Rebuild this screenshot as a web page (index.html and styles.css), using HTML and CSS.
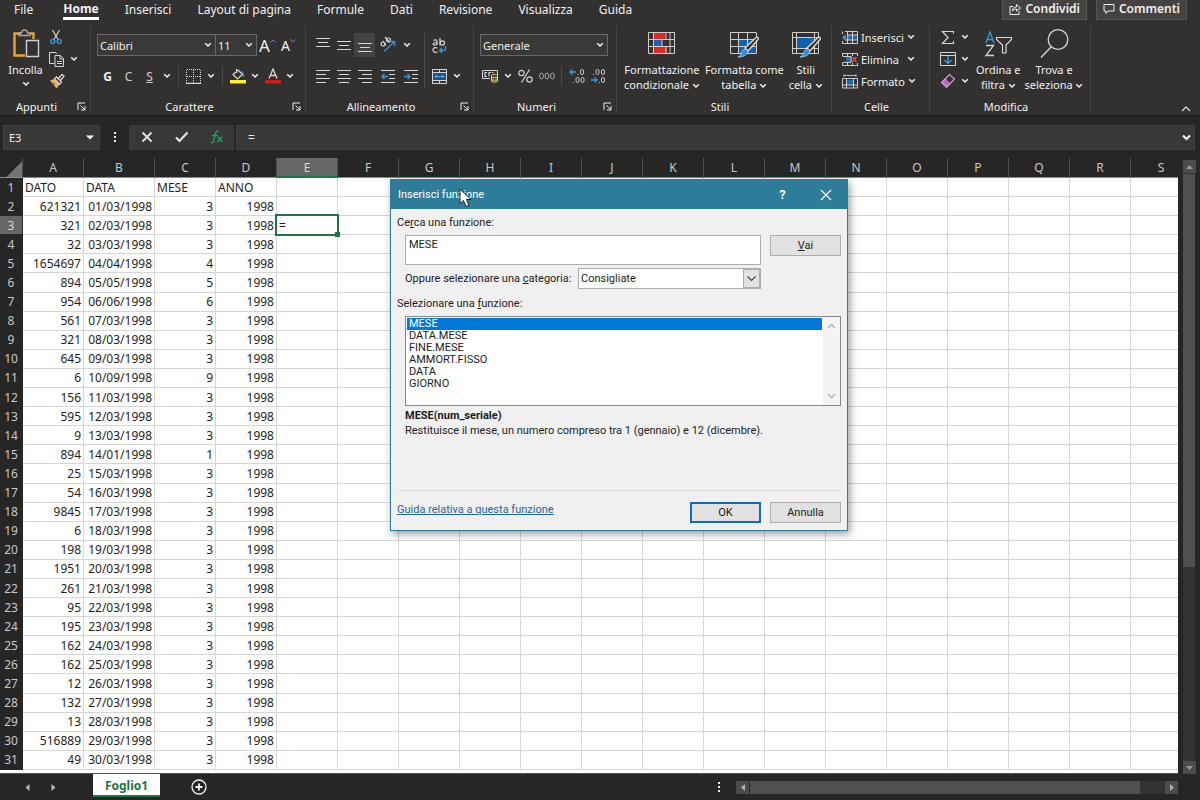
FILE: index.html
```html
<!DOCTYPE html>
<html lang="it">
<head>
<meta charset="utf-8">
<title>Foglio1</title>
<link rel="stylesheet" href="styles.css">
</head>
<body>
<svg class="defs" aria-hidden="true">
  <symbol id="chev" viewBox="0 0 8 6"><path d="M1.200 1.200 4 4l2.800-2.800" fill="none" stroke="currentColor" stroke-width="1.500"/></symbol>
  <symbol id="launch" viewBox="0 0 9 9"><path d="M1 8V1h7M3.500 3.500 7.500 7.500M8 4v4H4" fill="none" stroke="currentColor"/></symbol>
</svg>
<div class="app">
  <nav class="tabs">
    <button class="tab">File</button>
    <button class="tab active">Home</button>
    <button class="tab">Inserisci</button>
    <button class="tab">Layout di pagina</button>
    <button class="tab">Formule</button>
    <button class="tab">Dati</button>
    <button class="tab">Revisione</button>
    <button class="tab">Visualizza</button>
    <button class="tab">Guida</button>
    <div class="tab-actions">
      <button class="top-btn"><svg width="12" height="12" viewBox="0 0 12 12" fill="none" stroke="currentColor"><path d="M4 3.500H1v8h9V8M3.500 8c0-3 1.500-4 4-4V1.500L11.500 5 7.500 8V6C5.500 6 4.500 6.500 3.500 8z"/></svg>Condividi</button>
      <button class="top-btn"><svg width="12" height="12" viewBox="0 0 12 12" fill="none" stroke="currentColor"><path d="M1 1.500h10v6.500H5L2.800 10.500V8H1z"/></svg>Commenti</button>
    </div>
  </nav>

  <div class="ribbon">
    <section class="group g-clip">
      <div class="tools">
        <button class="big paste">
          <svg width="28" height="30" viewBox="0 0 28 30" fill="none"><path d="M9 4.500H2.500v22H13M18 4.500h3.500V10" stroke="#e8a33d" stroke-width="2.400"/><path d="M7 6.500V4h2.500c0-4 6-4 6 0H18v2.500z" stroke="#a9a9b4" stroke-width="1.300"/><path d="M14.500 11.500h12v16h-12z" stroke="#c8d2d8" stroke-width="1.400"/></svg>
          <span>Incolla</span>
          <svg class="chev"><use href="#chev"/></svg>
        </button>
        <div class="stack">
          <button class="ib" aria-label="Taglia"><svg width="14" height="16" viewBox="0 0 14 16" fill="none"><path d="M3.500 1 9 10.500M10.500 1 5 10.500" stroke="#d6d6d6" stroke-width="1.200"/><circle cx="3.800" cy="12.500" r="2" stroke="#3b97d3" stroke-width="1.400"/><circle cx="10.200" cy="12.500" r="2" stroke="#3b97d3" stroke-width="1.400"/></svg></button>
          <button class="ib split" aria-label="Copia"><svg width="16" height="16" viewBox="0 0 16 16" fill="none" stroke="#d6d6d6"><path d="M5.500 12.500h-5V1.500H7L8.500 3M6 4.500h5.500l3 3v8H6zM11 4.500V8h3.500M8 10.500h5M8 12.500h5"/></svg><svg class="chev"><use href="#chev"/></svg></button>
          <button class="ib" aria-label="Copia formato"><svg width="16" height="16" viewBox="0 0 16 16" fill="none"><path d="M1 7.500 5.500 6l5.500 5L7.500 15.500z" fill="#eeb262"/><path d="M5.500 6 7.500 4l5 5-1.800 2.200zM9.500 5.500l3.500-4 2 1.800-3.500 4.200" stroke="#d6d6d6" stroke-width="1.300"/><path d="M4 9.500 6 12" stroke="#5b4526"/></svg></button>
        </div>
      </div>
      <footer><span>Appunti</span><button aria-label="Opzioni Appunti"><svg width="9" height="9"><use href="#launch"/></svg></button></footer>
    </section>

    <section class="group g-font">
      <div class="tools rows">
        <div class="row">
          <span class="combo w-font"><select aria-label="Carattere"><option>Calibri</option></select><svg class="chev"><use href="#chev"/></svg></span>
          <span class="combo w-size"><select aria-label="Dimensione"><option>11</option></select><svg class="chev"><use href="#chev"/></svg></span>
          <button class="ib big-a">A<svg width="6" height="4" viewBox="0 0 6 4"><path d="M.5 3.500 3 1l2.500 2.500" fill="none" stroke="#3b97d3"/></svg></button>
          <button class="ib small-a">A<svg width="6" height="4" viewBox="0 0 6 4"><path d="M.5.5 3 3 5.500.5" fill="none" stroke="#3b97d3"/></svg></button>
        </div>
        <div class="row">
          <button class="ib bold">G</button>
          <button class="ib glyph">C</button>
          <button class="ib glyph under">S</button>
          <button class="drop" aria-label="Sottolineatura"><svg class="chev"><use href="#chev"/></svg></button>
          <i class="sep"></i>
          <button class="ib" aria-label="Bordi"><svg width="15" height="15" viewBox="0 0 15 15" fill="none" stroke="#d6d6d6"><path d="M.5 1v13M14.500 1v13M7.500 1v13M1 .5h13M1 7.500h13" stroke-dasharray="1 1"/><path d="M0 14.500h15" stroke-width="1.500"/></svg></button>
          <button class="drop" aria-label="Altri bordi"><svg class="chev"><use href="#chev"/></svg></button>
          <i class="sep"></i>
          <button class="ib" aria-label="Riempimento"><svg width="16" height="16" viewBox="0 0 16 16" fill="none"><path d="M3 6.500 8 2l4.500 4.500L7.500 11zM6.500 5V1" stroke="#d6d6d6" stroke-width="1.200"/><path d="M11 4c2 0 2.500 2 2.500 5" stroke="#3b97d3" stroke-width="1.500"/><path d="M0 12h16v3.500H0z" fill="#fcf22d"/></svg></button>
          <button class="drop" aria-label="Colori riempimento"><svg class="chev"><use href="#chev"/></svg></button>
          <button class="ib" aria-label="Colore carattere"><svg width="16" height="16" viewBox="0 0 16 16" fill="none"><path d="M4 10.500 8 1l4 9.500M5.500 7.500h5" stroke="#d6d6d6" stroke-width="1.300"/><path d="M0 12h16v3.500H0z" fill="#d01a1f"/></svg></button>
          <button class="drop" aria-label="Colori carattere"><svg class="chev"><use href="#chev"/></svg></button>
        </div>
      </div>
      <footer><span>Carattere</span><button aria-label="Opzioni Carattere"><svg width="9" height="9"><use href="#launch"/></svg></button></footer>
    </section>

    <section class="group g-align">
      <div class="tools rows">
        <div class="row">
          <button class="ib" aria-label="In alto"><svg width="14" height="14" viewBox="0 0 14 14" stroke="#d6d6d6"><path d="M0 .5h14M2 4.500h10M0 8.500h14"/></svg></button>
          <button class="ib" aria-label="Al centro"><svg width="14" height="14" viewBox="0 0 14 14" stroke="#d6d6d6"><path d="M0 3.500h14M2 7.500h10M0 11.500h14"/></svg></button>
          <button class="ib on" aria-label="In basso"><svg width="14" height="14" viewBox="0 0 14 14" stroke="#d6d6d6"><path d="M0 5.500h14M2 9.500h10M0 13.500h14"/></svg></button>
          <button class="ib wide" aria-label="Orientamento"><svg width="18" height="18" viewBox="0 0 18 18" fill="none"><g stroke="#d6d6d6" stroke-width="1.200"><circle cx="4" cy="8" r="2"/><path d="M4 5l3 4M6 1l4.500 5.500"/><circle cx="9.500" cy="4" r="2"/></g><path d="M5 15.500 15 6M11 5.500h4.500V10" stroke="#3b8fd0" stroke-width="1.500"/></svg></button>
          <button class="drop" aria-label="Altri orientamenti"><svg class="chev"><use href="#chev"/></svg></button>
        </div>
        <div class="row">
          <button class="ib" aria-label="Sinistra"><svg width="14" height="14" viewBox="0 0 14 14" stroke="#d6d6d6"><path d="M0 1.500h14M0 5.500h10M0 9.500h14M0 13.500h10"/></svg></button>
          <button class="ib" aria-label="Centro"><svg width="14" height="14" viewBox="0 0 14 14" stroke="#d6d6d6"><path d="M0 1.500h14M2 5.500h10M0 9.500h14M2 13.500h10"/></svg></button>
          <button class="ib" aria-label="Destra"><svg width="14" height="14" viewBox="0 0 14 14" stroke="#d6d6d6"><path d="M0 1.500h14M4 5.500h10M0 9.500h14M4 13.500h10"/></svg></button>
          <button class="ib wide" aria-label="Riduci rientro"><svg width="14" height="14" viewBox="0 0 14 14" fill="none" stroke="#d6d6d6"><path d="M0 1.500h14M8 5.500h6M8 9.500h6M0 13.500h14"/><path d="M7 7.500H1M3.500 5 1 7.500 3.500 10" stroke="#3b97d3" stroke-width="1.500"/></svg></button>
          <button class="ib" aria-label="Aumenta rientro"><svg width="14" height="14" viewBox="0 0 14 14" fill="none" stroke="#d6d6d6"><path d="M0 1.500h14M8 5.500h6M8 9.500h6M0 13.500h14"/><path d="M0 7.500h6M3.500 5 6 7.500 3.500 10" stroke="#3b97d3" stroke-width="1.500"/></svg></button>
        </div>
      </div>
      <i class="sep tall"></i>
      <div class="tools rows second">
        <div class="row"><button class="ib" aria-label="Testo a capo"><svg width="15" height="17" viewBox="0 0 15 17" fill="none" stroke="#d6d6d6" stroke-width="1.200"><path d="M1.500 3.500C3 2.500 5 2.500 5 4.500V8M5 5.500C3 5.500 1 5.500 1 7s3 1.500 4-.5M8 1v7.500"/><circle cx="10.300" cy="6" r="2.200"/><path d="M5.500 11C3 10 1 11 1 13s2 3 4.500 2"/><path d="M13.500 9v3.500c0 1-1 1-1.500 1H7.500M10 11l-2.500 2.500L10 16" stroke="#3b97d3" stroke-width="1.400"/></svg></button></div>
        <div class="row"><button class="ib" aria-label="Unisci e centra"><svg width="15" height="15" viewBox="0 0 15 15" fill="none"><path d="M1 4h13v7H1z" fill="#17537f"/><path d="M.5.500h14v14H.5zM.5 3.500h14M.5 11.500h14M7.500.5v3M7.500 11.500v3" stroke="#d6d6d6"/><path d="M3 7.500h9M5 5.500l-2 2 2 2M10 5.500l2 2-2 2" stroke="#58b0ea"/></svg></button><button class="drop" aria-label="Altre unioni"><svg class="chev"><use href="#chev"/></svg></button></div>
      </div>
      <footer><span>Allineamento</span><button aria-label="Opzioni Allineamento"><svg width="9" height="9"><use href="#launch"/></svg></button></footer>
    </section>

    <section class="group g-num">
      <div class="tools rows">
        <div class="row"><span class="combo w-num"><select aria-label="Formato numero"><option>Generale</option></select><svg class="chev"><use href="#chev"/></svg></span></div>
        <div class="row">
          <button class="ib" aria-label="Valuta"><svg width="17" height="14" viewBox="0 0 17 14" fill="none"><path d="M.5 1.500h15V6M.5 1.500v8H8" stroke="#d6d6d6"/><path d="M5 3.500H3v4h2M7 7.500v-4h2M11.500 3.500H10" stroke="#d6d6d6" stroke-width="1.200"/><path d="M9.500 6.500c0-1.500 6-1.500 6 0v5.500c0 1.500-6 1.500-6 0z" fill="#4a4424" stroke="#f0dc7e"/><path d="M9.500 8c1.500 1 4.500 1 6 0M9.500 10.500c1.500 1 4.500 1 6 0" stroke="#f0dc7e"/></svg></button>
          <button class="drop" aria-label="Altre valute"><svg class="chev"><use href="#chev"/></svg></button>
          <button class="ib" aria-label="Percentuale"><svg width="15" height="14" viewBox="0 0 15 14" fill="none" stroke="#d6d6d6" stroke-width="1.200"><circle cx="3.500" cy="4" r="2.700"/><circle cx="11.500" cy="10.500" r="2.700"/><path d="M11.500.5 3.500 13.500"/></svg></button>
          <button class="ib" aria-label="Migliaia"><svg width="16" height="8" viewBox="0 0 16 8" fill="none" stroke="#a8a8a8"><ellipse cx="2.500" cy="4" rx="1.900" ry="3"/><ellipse cx="8" cy="4" rx="1.900" ry="3"/><ellipse cx="13.500" cy="4" rx="1.900" ry="3"/></svg></button>
          <i class="sep"></i>
          <button class="ib" aria-label="Aumenta decimali"><svg width="16" height="16" viewBox="0 0 16 16" fill="none" stroke="#c4c4c4"><rect x="11.500" y="1.500" width="3" height="5" rx="1.500"/><rect x="7" y="9.500" width="3" height="5" rx="1.500"/><rect x="12" y="9.500" width="3" height="5" rx="1.500"/><path d="M9 6v1M4.500 14v1"/><path d="M7 4H1M3.500 1.500 1 4l2.500 2.500" stroke="#3b97d3" stroke-width="1.400"/></svg></button>
          <button class="ib" aria-label="Diminuisci decimali"><svg width="16" height="16" viewBox="0 0 16 16" fill="none" stroke="#c4c4c4"><rect x="6" y="1.500" width="3" height="5" rx="1.500"/><rect x="11.500" y="1.500" width="3" height="5" rx="1.500"/><rect x="11.500" y="9.500" width="3" height="5" rx="1.500"/><path d="M3.500 6v1M9.500 14v1"/><path d="M1 12h6M4.500 9.500 7 12l-2.500 2.500" stroke="#3b97d3" stroke-width="1.400"/></svg></button>
        </div>
      </div>
      <footer><span>Numeri</span><button aria-label="Opzioni Numeri"><svg width="9" height="9"><use href="#launch"/></svg></button></footer>
    </section>

    <section class="group g-style">
      <div class="tools">
        <button class="big"><svg width="28" height="30" viewBox="0 0 28 30" fill="none"><path d="M6 4h11v6H6zM6 18h13v6H6z" fill="#dc2a26"/><path d="M6 11h8v6H6z" fill="#1b62b5"/><path d="M.5 3.500h26v21H.5zM.5 10.500h26M.5 17.500h26M5.500 3.500v21M18 3.500v7M18 17.500v7M22 3.500v21M14 10.500v7" stroke="#d2cdc8"/></svg><span>Formattazione<br>condizionale <svg class="chev"><use href="#chev"/></svg></span></button>
        <button class="big"><svg width="30" height="30" viewBox="0 0 30 30" fill="none"><path d="M9 10h18v15H9z" fill="#0f63ae"/><path d="M1.500 3.500h26v21h-26zM1.500 10.500h26M1.500 17.500h26M9.500 3.500v21M18.500 3.500v21" stroke="#d2cdc8"/><path d="M16 19 27 8.500c2-1 3 .5 2 2L19 22z" fill="#323130" stroke="#e0ddd6" stroke-width="1.300"/><path d="M9 28c4-1 3-8 8-8 4 2 1 8-8 8z" fill="#2f8ad8" stroke="#b9ddf5" stroke-width=".8"/></svg><span>Formatta come<br>tabella <svg class="chev"><use href="#chev"/></svg></span></button>
        <button class="big"><svg width="30" height="30" viewBox="0 0 30 30" fill="none"><path d="M6 9h18v10H6z" fill="#0f63ae"/><path d="M1.500 3.500h26v21h-26zM1.500 8.500h26M1.500 19.500h26M5.500 3.500v21M23.500 3.500v21" stroke="#d2cdc8"/><path d="M16 19 27 8.500c2-1 3 .5 2 2L19 22z" fill="#323130" stroke="#e0ddd6" stroke-width="1.300"/><path d="M9 28c4-1 3-8 8-8 4 2 1 8-8 8z" fill="#2f8ad8" stroke="#b9ddf5" stroke-width=".8"/></svg><span>Stili<br>cella <svg class="chev"><use href="#chev"/></svg></span></button>
      </div>
      <footer><span>Stili</span></footer>
    </section>

    <section class="group g-cells">
      <div class="tools stack">
        <button class="line"><svg width="16" height="15" viewBox="0 0 16 15" fill="none"><path d="M5 5h10v5H5z" fill="#1769b0"/><path d="M3 1.500h12.500v12H.5V11M.5 4V1.500M5.500 1v13M10.500 1v13M6 5h9.500M3 10h12.500" stroke="#d2cdc8"/><path d="M7 7.500H1M3.500 5 1 7.500 3.500 10" stroke="#3b97d3" stroke-width="1.400"/></svg><span>Inserisci</span><svg class="chev"><use href="#chev"/></svg></button>
        <button class="line"><svg width="16" height="15" viewBox="0 0 16 15" fill="none"><path d="M4 5h6v5H4z" fill="#1769b0"/><path d="M.5 1.500h15M.5 13.500h15M.5 1v3.500M.5 10.500v3M5.500 1v3M10.500 1v3M15.500 1v3M5.500 11v3M10.500 11v3M15.500 11v3M1 4.500h8v6H1" stroke="#d2cdc8"/><path d="m10.500 5 4 5M14.500 5l-4 5" stroke="#e0463c" stroke-width="1.500"/></svg><span>Elimina</span><svg class="chev"><use href="#chev"/></svg></button>
        <button class="line"><svg width="16" height="15" viewBox="0 0 16 15" fill="none"><path d="M4 6h8v5H4z" fill="#1769b0"/><path d="M.5 4.500h15v9.500H.5zM4.500 4v10M11.500 4v10M.5 11h15" stroke="#d2cdc8"/><path d="M2 1.500h12M2 0v3M14 0v3" stroke="#8fc3e8"/></svg><span>Formato</span><svg class="chev"><use href="#chev"/></svg></button>
      </div>
      <footer><span>Celle</span></footer>
    </section>

    <section class="group g-edit">
      <div class="tools">
        <div class="stack">
          <button class="ib split" aria-label="Somma"><svg width="16" height="15" viewBox="0 0 16 15" fill="none" stroke="#d6d6d6" stroke-width="1.200"><path d="M13.500 3.500V1.500H2.500L8 7.500l-5.500 6h11v-2.500"/></svg><svg class="chev"><use href="#chev"/></svg></button>
          <button class="ib split" aria-label="Riempi"><svg width="16" height="14" viewBox="0 0 16 14" fill="none"><path d="M1 .5h14.500v13H.5V.5zM.5 3.500h15" stroke="#d6d6d6"/><path d="M8 4v7M4.500 8 8 11.500 11.500 8" stroke="#3b97d3" stroke-width="1.500"/></svg><svg class="chev"><use href="#chev"/></svg></button>
          <button class="ib split" aria-label="Cancella"><svg width="16" height="16" viewBox="0 0 16 16" fill="none"><path d="M1.500 9.500 5.500 5.500l5 5-4 4z" fill="#c264cf"/><path d="M1.500 9.500 9.500 1.500l5 4.500-8 8.500z" stroke="#c9a2cf" stroke-width="1.200"/></svg><svg class="chev"><use href="#chev"/></svg></button>
        </div>
        <button class="big"><svg width="30" height="30" viewBox="0 0 30 30" fill="none"><path d="M3 14 7 3l4 11M4.500 10.500h5" stroke="#3b97d3" stroke-width="1.400"/><path d="M3 16.500h7.500L3 26.500h8" stroke="#d6d6d6" stroke-width="1.300"/><path d="M13.500 8.500h15v2L23 16v8h-3.500v-8l-6-5.500z" stroke="#d6d6d6" stroke-width="1.200"/></svg><span>Ordina e<br>filtra <svg class="chev"><use href="#chev"/></svg></span></button>
        <button class="big"><svg width="30" height="30" viewBox="0 0 30 30" fill="none" stroke="#d6d6d6" stroke-width="1.300"><circle cx="19" cy="10.500" r="9.800"/><path d="M12 18 2 28.500"/></svg><span>Trova e<br>seleziona <svg class="chev"><use href="#chev"/></svg></span></button>
      </div>
      <footer><span>Modifica</span></footer>
    </section>
    <button class="collapse" aria-label="Comprimi"><svg width="10" height="6" viewBox="0 0 10 6"><path d="M1 5l4-4 4 4" fill="none" stroke="currentColor" stroke-width="1.300"/></svg></button>
  </div>

  <div class="formula">
    <label class="namebox"><input value="E3" aria-label="Casella nome"><svg width="8" height="5" viewBox="0 0 8 5"><path d="M0 .5h8L4 4.500z" fill="#fff"/></svg></label>
    <span class="dots"><i></i><i></i><i></i></span>
    <div class="fx">
      <button aria-label="Annulla"><svg width="12" height="12" viewBox="0 0 12 12"><path d="M1.500 1.500l9 9M10.500 1.500l-9 9" stroke="#e4e4e4" stroke-width="1.800"/></svg></button>
      <button aria-label="Invio"><svg width="14" height="12" viewBox="0 0 14 12"><path d="M1 6.500 4.500 10 12.500 1.500" fill="none" stroke="#e4e4e4" stroke-width="2.200"/></svg></button>
      <button aria-label="Inserisci funzione"><svg width="14" height="14" viewBox="0 0 14 14" fill="none" stroke="#2f9a68" stroke-width="1.400"><path d="M8.500 1.500C6.500.5 5.500 2 5 5l-1 5c-.5 2.500-1.500 3-3 2.500M2 5.500h5.500M7.500 7c2 0 2.500 4.500 5 4.500M12.500 7C10.500 7 9 11.500 7 11.500"/></svg></button>
    </div>
    <label class="fbar"><input value="=" aria-label="Formula"><svg width="9" height="7" viewBox="0 0 9 7"><path d="M1 1.500 4.500 5 8 1.500" fill="none" stroke="#fff" stroke-width="2"/></svg></label>
  </div>

  <main class="work">
    <div class="sheet"><table id="grid"></table></div>
    <div class="vscroll">
      <button class="sb" aria-label="Su"><svg width="7" height="4" viewBox="0 0 7 4"><path d="M0 4 3.500 0 7 4z" fill="#9a9a9a"/></svg></button>
      <div class="track"><div class="thumb"></div></div>
      <button class="sb" aria-label="Giù"><svg width="7" height="4" viewBox="0 0 7 4"><path d="M0 0h7L3.500 4z" fill="#9a9a9a"/></svg></button>
    </div>
  </main>

  <footer class="bottom">
    <div class="sheets">
      <button aria-label="Precedente"><svg width="5" height="7" viewBox="0 0 5 7"><path d="M4.500 0v7L.5 3.500z" fill="#b8b8b8"/></svg></button>
      <button aria-label="Successivo"><svg width="5" height="7" viewBox="0 0 5 7"><path d="M.5 0v7l4-3.500z" fill="#b8b8b8"/></svg></button>
      <button class="sheet-tab">Foglio1</button>
      <button class="add" aria-label="Nuovo foglio"><svg width="16" height="16" viewBox="0 0 16 16" fill="none" stroke="#f0f0f0"><circle cx="8" cy="8" r="7" stroke-width="1.300"/><path d="M8 4.500v7M4.500 8h7" stroke-width="1.800"/></svg></button>
    </div>
    <div class="hscroll">
      <span class="dots"><i></i><i></i><i></i></span>
      <button class="sb" aria-label="Sinistra"><svg width="4" height="7" viewBox="0 0 4 7"><path d="M4 0v7L0 3.500z" fill="#b0b0b0"/></svg></button>
      <div class="track"><div class="thumb"></div></div>
      <button class="sb" aria-label="Destra"><svg width="4" height="7" viewBox="0 0 4 7"><path d="M0 0v7l4-3.500z" fill="#b0b0b0"/></svg></button>
    </div>
  </footer>
</div>

<div class="dialog" role="dialog" aria-labelledby="dlg-title">
  <header>
    <h1 id="dlg-title">Inserisci funzione</h1>
    <button class="help">?</button>
    <button aria-label="Chiudi"><svg width="12" height="12" viewBox="0 0 12 12"><path d="M1 1l10 10M11 1 1 11" stroke="#fff" stroke-width="1.200"/></svg></button>
  </header>
  <div class="body">
    <label class="lbl" for="q">Ce<u>r</u>ca una funzione:</label>
    <div class="search">
      <textarea id="q">MESE</textarea>
      <button class="btn"><u>V</u>ai</button>
    </div>
    <div class="cat">
      <label for="cat">Oppure selezionare una <u>c</u>ategoria:</label>
      <span class="pick"><select id="cat"><option>Consigliate</option></select><i><svg width="9" height="6" viewBox="0 0 9 6"><path d="M.5.5l4 4 4-4" fill="none" stroke="#444" stroke-width="1.200"/></svg></i></span>
    </div>
    <span class="lbl second" id="fn-lbl">Selezionare una <u>f</u>unzione:</span>
    <div class="list">
      <ul role="listbox" aria-labelledby="fn-lbl">
        <li role="option" class="sel" aria-selected="true">MESE</li>
        <li role="option">DATA.MESE</li>
        <li role="option">FINE.MESE</li>
        <li role="option">AMMORT.FISSO</li>
        <li role="option">DATA</li>
        <li role="option">GIORNO</li>
      </ul>
      <div class="gutter">
        <svg width="9" height="6" viewBox="0 0 9 6"><path d="M1 5l3.500-3.500L8 5" fill="none" stroke="#b4b4b4" stroke-width="1.500"/></svg>
        <svg width="9" height="6" viewBox="0 0 9 6"><path d="M1 1l3.500 3.500L8 1" fill="none" stroke="#b4b4b4" stroke-width="1.500"/></svg>
      </div>
    </div>
    <div class="desc"><strong>MESE(num_seriale)</strong><p>Restituisce il mese, un numero compreso tra 1 (gennaio) e 12 (dicembre).</p></div>
    <div class="actions">
      <a href="#">Guida relativa a questa funzione</a>
      <button class="btn primary">OK</button>
      <button class="btn">Annulla</button>
    </div>
  </div>
</div>
<svg class="cursor" width="14" height="20" viewBox="0 0 14 20"><path d="M1 1v14.500l3.500-3L7 18.500l3-1.200-2.600-5.800H12z" fill="#fff" stroke="#222"/></svg>
<script src="script.js"></script>
</body>
</html>
```

FILE: script.js
```js
const columns = "ABCDEFGHIJKLMNOPQRS".split("");
const widths = [23, 61, 71].concat(Array(17).fill(61));
const rows = [
  ["DATO", "DATA", "MESE", "ANNO"],
  [621321, "01/03/1998", 3], [321, "02/03/1998", 3], [32, "03/03/1998", 3],
  [1654697, "04/04/1998", 4], [894, "05/05/1998", 5], [954, "06/06/1998", 6],
  [561, "07/03/1998", 3], [321, "08/03/1998", 3], [645, "09/03/1998", 3],
  [6, "10/09/1998", 9], [156, "11/03/1998", 3], [595, "12/03/1998", 3],
  [9, "13/03/1998", 3], [894, "14/01/1998", 1], [25, "15/03/1998", 3],
  [54, "16/03/1998", 3], [9845, "17/03/1998", 3], [6, "18/03/1998", 3],
  [198, "19/03/1998", 3], [1951, "20/03/1998", 3], [261, "21/03/1998", 3],
  [95, "22/03/1998", 3], [195, "23/03/1998", 3], [162, "24/03/1998", 3],
  [162, "25/03/1998", 3], [12, "26/03/1998", 3], [132, "27/03/1998", 3],
  [13, "28/03/1998", 3], [516889, "29/03/1998", 3], [49, "30/03/1998", 3]
];

let html = "<colgroup>" + widths.map(w => `<col style="width:${w}px">`).join("") + "</colgroup>";
html += '<thead><tr><th class="corner"></th>' +
  columns.map(c => `<th scope="col"${c === "E" ? ' class="current"' : ""}>${c}</th>`).join("") +
  "</tr></thead><tbody>";
rows.forEach((row, r) => {
  const cells = columns.map((c, i) => {
    if (r === 2 && c === "E") return '<td class="editing">=</td>';
    let value = row[i];
    if (r > 0 && i === 3) value = 1998;
    return `<td${r > 0 ? ' class="n"' : ""}>${value === undefined ? "" : value}</td>`;
  });
  html += `<tr><th scope="row"${r === 2 ? ' class="current"' : ""}>${r + 1}</th>${cells.join("")}</tr>`;
});
html += "</tbody>";
document.getElementById("grid").innerHTML = html;
```

FILE: styles.css
```css
* { box-sizing: border-box; }
body {
  margin: 0;
  font: 12px/15px "Noto Sans", "Open Sans", sans-serif;
  color: #f0f0f0;
  background: #262626;
}
button, input, select, textarea { font: inherit; color: inherit; }
button { padding: 0; border: 0; background: none; }
input, select { appearance: none; border: 0; background: none; outline: 0; }
svg { flex: none; display: block; }
.defs { position: absolute; width: 0; height: 0; }
.app { display: flex; flex-direction: column; height: 100vh; overflow: hidden; }

/* Ribbon tabs */
.tabs { display: flex; gap: 26px; height: 24px; padding: 0 13px 0 14px; background: #323130; align-items: flex-start; }
.tab { height: 20px; padding-bottom: 2px; white-space: nowrap; }
.tab.active { font-weight: 700; border-bottom: 3px solid #fff; padding-bottom: 0; }
.tab:first-child { margin-right: 4px; }
.tab-actions { display: flex; gap: 9px; margin-left: auto; }
.top-btn { display: flex; align-items: center; gap: 4px; height: 20px; padding: 0 6px 2px; font-weight: 600; background: #444342; border: 1px solid #565554; border-top: 0; }

/* Ribbon groups */
.ribbon { display: flex; height: 92px; padding-top: 2px; background: #323130; border-bottom: 1px solid #1c1c1c; }
.group { display: grid; grid-template-rows: 71px 18px; height: 87px; border-right: 1px solid #454443; }
.group > footer { grid-row: 2; grid-column: 1 / -1; display: flex; align-items: center; justify-content: center; font-size: 11px; padding-right: 4px; }
.group > footer span { flex: 1; text-align: center; padding-right: 4px; }
.tools { display: flex; min-width: 0; }
.rows { flex-direction: column; padding-top: 7px; gap: 7px; }
.row { display: flex; align-items: center; height: 24px; }
.stack { display: flex; flex-direction: column; }
.chev { width: 8px; height: 6px; }
.ib { display: flex; align-items: center; justify-content: center; width: 21px; height: 24px; }
.ib.wide { width: 25px; }
.ib.on { background: #444342; }
.drop { display: flex; align-items: center; justify-content: center; width: 14px; height: 24px; }
.stack .ib { height: 22px; justify-content: flex-start; }
.ib.split { width: 32px; gap: 5px; }
.sep { width: 1px; height: 20px; margin: 0 4px; background: #4a4948; }
.sep.tall { height: 56px; margin: 7px 0; }
.big { display: flex; flex-direction: column; align-items: center; gap: 3px; padding-top: 3px; white-space: nowrap; font-size: 11px; }
.big span { text-align: center; }
.big span .chev { display: inline-block; vertical-align: middle; }
.combo { display: flex; align-items: center; height: 22px; padding-right: 3px; border: 1px solid #6a6968; background: #3a3938; font-size: 11px; }
.combo select { flex: 1; min-width: 0; padding: 0 2px; }

.g-clip { width: 91px; }
.g-clip .tools { gap: 5px; padding-left: 7px; }
.paste { width: 37px; }
.paste .chev { margin-top: 1px; }
.g-font { width: 215px; }
.g-font .rows, .g-num .rows { padding-left: 6px; }
.w-font { width: 119px; }
.w-size { width: 41px; border-left: 0; }
.big-a { font-size: 17px; }
.small-a { font-size: 14px; }
.big-a svg, .small-a svg { margin-bottom: 9px; }
.bold { font-weight: 700; }
.glyph { color: #d0d0d0; }
.under { text-decoration: underline; }
.g-align { width: 168px; grid-template-columns: 118px 1px 1fr; }
.g-align .rows { padding-left: 6px; }
.g-align .second { padding-left: 4px; }
.g-num { width: 143px; }
.w-num { width: 128px; }
.g-style { width: 215px; }
.g-style .tools { padding-left: 7px; gap: 5px; }
.g-cells { width: 98px; }
.g-cells .tools { padding-left: 10px; font-size: 11px; }
.line { display: flex; align-items: center; gap: 3px; height: 22px; padding-right: 14px; }
.line span { flex: 1; text-align: left; }
.g-edit { width: 161px; }
.g-edit .tools { padding-left: 10px; gap: 4px; }
.collapse { margin: auto 9px 3px auto; color: #d8d8d8; }

/* Formula bar */
.formula { display: flex; align-items: center; height: 42px; padding: 0 5px 0 3px; }
.namebox { display: flex; align-items: center; width: 97px; height: 25px; padding: 0 5px; background: #383838; border: 1px solid #404040; }
.namebox input { width: 0; flex: 1; padding: 0; font-size: 11px; }
.dots { display: flex; flex-direction: column; align-items: center; gap: 2px; width: 29px; }
.dots i { width: 2px; height: 2px; background: #ececec; }
.fx { display: flex; height: 25px; width: 105px; background: #383838; }
.fx button { flex: 1; display: flex; align-items: center; justify-content: center; }
.fbar { display: flex; flex: 1; align-items: center; height: 25px; margin-left: 2px; padding: 0 3px 0 11px; background: #383838; border: 1px solid #404040; }
.fbar input { flex: 1; padding: 0; }

/* Worksheet */
.work { display: flex; flex: 1; min-height: 0; }
.sheet { flex: 1; min-width: 0; overflow: hidden; background: #fff; border-bottom: 1px solid #555; }
#grid { width: 1192px; height: calc(100% - 3px); table-layout: fixed; border-spacing: 0; color: #1e1e1e; }
#grid th, #grid td { height: 19px; padding: 1px 2px 0; line-height: 16px; font-weight: 400; white-space: nowrap; border-right: 1px solid #d6d6d6; border-bottom: 1px solid #d6d6d6; }
#grid td { text-align: left; }
#grid td.n { text-align: right; }
#grid th { padding: 1px 0 0; text-align: center; color: #c8c8c8; background: #262626; border-color: #262626; }
#grid thead th { height: 20px; border-right-color: #505050; border-bottom-color: #8a8a8a; }
#grid th.current { color: #d8d8d8; background: #666; }
#grid thead th.current { border-bottom: 2px solid #217346; }
#grid .corner { background: linear-gradient(135deg, #262626 62%, #757575 62%); }
#grid td.editing { position: relative; text-align: left; }
.editing::after { content: ""; position: absolute; inset: -2px; border: 2px solid #217346; }
.editing::before { content: ""; position: absolute; right: -3px; bottom: -3px; width: 5px; height: 5px; background: #217346; }
.vscroll { display: flex; flex-direction: column; width: 22px; padding: 2px 5px 0; }
.sb { display: flex; align-items: center; justify-content: center; width: 13px; height: 13px; background: #4c4c4c; }
.track { flex: 1; background: #323232; }
.vscroll .track { padding-top: 1px; }
.vscroll .thumb { height: 67%; background: #505050; }

/* Sheet tabs */
.bottom { display: flex; height: 26px; }
.sheets { display: flex; flex: 1; align-items: flex-start; }
.sheets button { display: flex; align-items: center; justify-content: center; width: 26px; height: 26px; }
.sheets button:first-child { margin-left: 14px; }
.sheets .sheet-tab { width: 67px; height: 23px; margin-left: 27px; padding-top: 2px; color: #217346; font-weight: 700; background: #fff; border-bottom: 2px solid #217346; }
.sheets .add { margin-left: 26px; }
.hscroll { display: flex; align-items: center; width: 42%; padding-right: 22px; }
.hscroll .dots { width: 40px; padding-left: 6px; }
.hscroll .track { height: 13px; margin: 0 0 0 1px; }
.hscroll .thumb { width: 94%; height: 13px; background: #505050; }

/* Function dialog */
.dialog { position: absolute; left: 390px; top: 179px; width: 458px; color: #1c1c1c; font-family: Roboto, "Noto Sans", sans-serif; font-size: 11px; background: #f0f0f0; border: 1px solid #2d7d9a; box-shadow: 2px 3px 8px rgba(0, 0, 0, .4); }
.dialog header { display: flex; align-items: center; height: 29px; padding-left: 7px; color: #fff; background: #2d7d9a; }
.dialog h1 { flex: 1; margin: 0; font-size: 11px; font-weight: 400; }
.dialog header button { display: flex; align-items: center; justify-content: center; width: 43px; height: 29px; }
.dialog .help { font-size: 13px; font-weight: 600; }
.body { display: flex; flex-direction: column; padding: 6px 6px 7px; }
.lbl { line-height: 15px; }
.search { display: flex; align-items: flex-start; gap: 9px; margin: 5px 0 3px 8px; }
.search textarea { flex: 1; height: 30px; padding: 1px 3px; resize: none; outline: 0; background: #fff; border: 1px solid #abadb3; line-height: 15px; }
.btn { width: 71px; height: 21px; background: #e1e1e1; border: 1px solid #adadad; }
.btn.primary { border: 2px solid #0f6cbd; }
.cat { display: flex; align-items: center; justify-content: space-between; margin: 0 80px 0 8px; white-space: nowrap; }
.pick { display: flex; width: 183px; height: 21px; background: #fff; border: 1px solid #adadad; }
.pick select { flex: 1; min-width: 0; padding: 0 2px; }
.pick i { display: flex; align-items: center; justify-content: center; width: 17px; background: #e1e1e1; border: 1px solid #adadad; }
.lbl.second { margin: 7px 0 5px; }
.list { display: flex; height: 90px; margin-left: 8px; background: #fff; border: 1px solid #828790; }
.list ul { flex: 1; margin: 0; padding: 1px; list-style: none; line-height: 12px; }
.list li { padding: 0 2px; }
.list .sel { color: #fff; background: #0078d7; }
.gutter { display: flex; flex-direction: column; align-items: center; justify-content: space-between; width: 17px; padding: 6px 0; background: #f4f4f4; }
.desc { height: 83px; margin: 2px 0 0; padding-left: 8px; border-bottom: 1px solid #dcdcdc; }
.desc p { margin: 0; }
.actions { display: flex; gap: 9px; margin-top: 11px; }
.actions a { margin-right: auto; color: #1f66a5; }
.cursor { position: absolute; left: 459px; top: 188px; }
```
